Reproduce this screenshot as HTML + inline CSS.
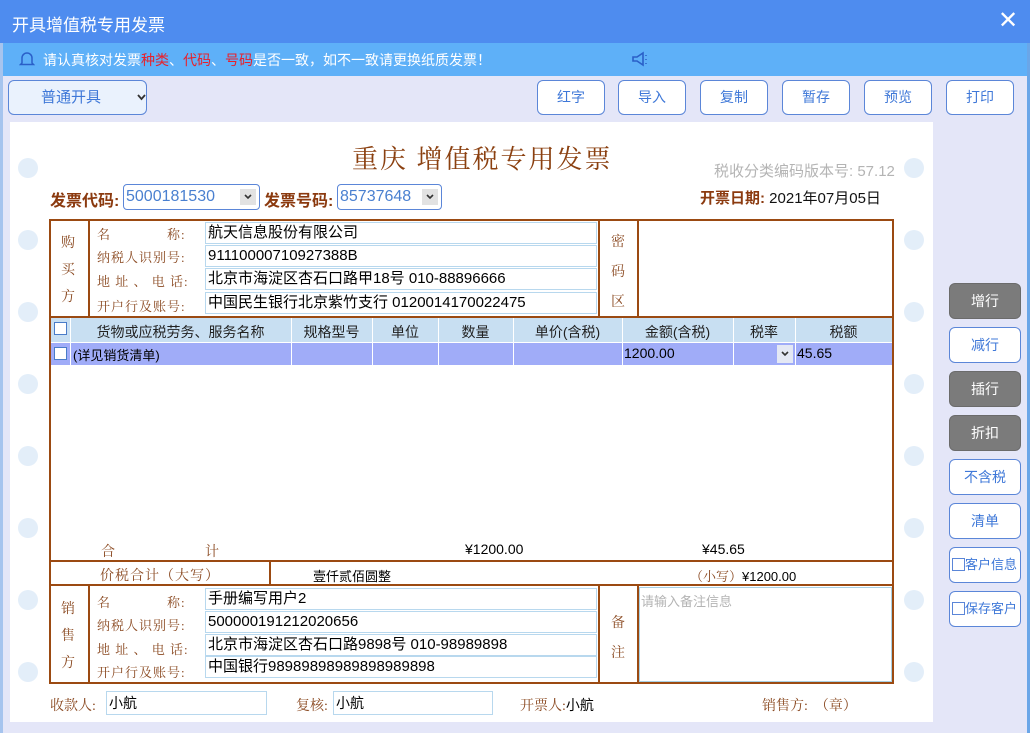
<!DOCTYPE html>
<html><head><meta charset="utf-8"><style>
*{margin:0;padding:0;box-sizing:border-box}
body{width:1030px;height:733px;overflow:hidden;background:#e4e6f8;font-family:"Liberation Sans","Noto Sans CJK SC",sans-serif;position:relative;font-size:14px}
.a{position:absolute}
.kai{font-family:"Liberation Serif","Noto Serif CJK SC",serif;color:#8b4a22}
.btn{position:absolute;top:80px;width:68px;height:35px;border:1px solid #5b86d8;border-radius:6px;background:#fff;color:#3f78d8;font-size:14px;text-align:center;line-height:33px}
.sb{position:absolute;left:949px;width:72px;height:36px;border:1px solid #5b86d8;border-radius:6px;background:#fff;color:#3f78d8;font-size:14px;text-align:center;line-height:34px}
.sb.g{background:#7b7b7b;color:#fff;border-color:#6b6b6b}
.hole{position:absolute;width:20px;height:20px;border-radius:50%;background:#e3eef9}
.bl{position:absolute;background:#9b4a12}
.inp{position:absolute;left:205px;width:392px;height:22px;border:1px solid #b8d8ee;font-size:15px;line-height:20px;padding-left:2px;color:#000}
.lab{position:absolute;left:97px;font-size:13px;letter-spacing:1px}
.hd{position:absolute;top:322px;font-size:14px;color:#222;text-align:center}
.vc{position:absolute;width:1px;background:#fff}
.cb{display:inline-block;width:13px;height:13px;border:1px solid #4a7cc8;background:#fff}
.chev{position:absolute;width:16px;height:16px;background:#e2e2e2}
</style></head><body>
<div class="a" style="left:0;top:0;width:1030px;height:43px;background:#4e8cef"></div>
<div class="a" style="left:12px;top:11px;color:#fff;font-size:17px">开具增值税专用发票</div>
<div class="a" style="left:998px;top:6px;color:#fff;font-size:24px">✕</div>
<div class="a" style="left:0;top:43px;width:1030px;height:33px;background:#5eb0f8"></div>
<svg class="a" style="left:19px;top:50px" width="16" height="18" viewBox="0 0 16 18"><path d="M3 13V8a5 5 0 0 1 10 0v5l1.5 1.5h-13z" fill="none" stroke="#2a5fc8" stroke-width="1.5"/></svg>
<div class="a" style="left:43px;top:50px;color:#fff;font-size:14px">请认真核对发票<span style="color:#e8202a">种类</span>、<span style="color:#e8202a">代码</span>、<span style="color:#e8202a">号码</span>是否一致，如不一致请更换纸质发票！</div>
<svg class="a" style="left:630px;top:50px" width="22" height="18" viewBox="0 0 22 18"><path d="M3 7h4l6-4v12l-6-4H3z" fill="none" stroke="#2a5fc8" stroke-width="1.6"/><path d="M16 5v1M16 9v1M16 13v1" stroke="#2a5fc8" stroke-width="1.5"/></svg>
<div class="a" style="left:1027px;top:43px;width:3px;height:690px;background:#6aa6e8"></div>
<div class="a" style="left:0;top:43px;width:3px;height:690px;background:#a6c4ee"></div>

<div class="a" style="left:8px;top:80px;width:139px;height:35px;border:1px solid #5b86d8;border-radius:6px;background:#eaf2fd;color:#3f78d8;font-size:15px;line-height:33px;padding-left:32px">普通开具<svg style="position:absolute;left:128px;top:13px" width="9" height="7" viewBox="0 0 9 7"><path d="M1 1l3.5 4L8 1" fill="none" stroke="#333" stroke-width="1.8"/></svg></div>
<div class="btn" style="left:537px">红字</div>
<div class="btn" style="left:618px">导入</div>
<div class="btn" style="left:700px">复制</div>
<div class="btn" style="left:782px">暂存</div>
<div class="btn" style="left:864px">预览</div>
<div class="btn" style="left:946px">打印</div>

<div class="a" style="left:10px;top:122px;width:923px;height:600px;background:#fff"></div>

<div class="hole" style="left:18px;top:158px"></div><div class="hole" style="left:18px;top:230px"></div><div class="hole" style="left:18px;top:302px"></div><div class="hole" style="left:18px;top:374px"></div><div class="hole" style="left:18px;top:446px"></div><div class="hole" style="left:18px;top:518px"></div><div class="hole" style="left:18px;top:590px"></div><div class="hole" style="left:18px;top:662px"></div>
<div class="hole" style="left:904px;top:158px"></div><div class="hole" style="left:904px;top:230px"></div><div class="hole" style="left:904px;top:302px"></div><div class="hole" style="left:904px;top:374px"></div><div class="hole" style="left:904px;top:446px"></div><div class="hole" style="left:904px;top:518px"></div><div class="hole" style="left:904px;top:590px"></div><div class="hole" style="left:904px;top:662px"></div>

<div class="a kai" style="left:352px;top:139px;font-size:26px;letter-spacing:2px;color:#8b4010">重庆 增值税专用发票</div>
<div class="a" style="left:714px;top:160px;color:#b4b4b4;font-size:15px">税收分类编码版本号: 57.12</div>
<div class="a" style="left:50px;top:187px;color:#8b3a0f;font-size:16px;font-weight:bold">发票代码:</div>
<div class="a" style="left:123px;top:184px;width:137px;height:26px;border:1px solid #5b86d8;border-radius:4px;color:#4a80d0;font-size:16px;line-height:24px;padding-left:2px">5000181530<span class="chev" style="right:3px;top:4px"><svg style="position:absolute;left:4px;top:5px" width="8" height="6" viewBox="0 0 8 6"><path d="M1 1l3 3 3-3" fill="none" stroke="#333" stroke-width="1.6"/></svg></span></div>
<div class="a" style="left:264px;top:187px;color:#8b3a0f;font-size:16px;font-weight:bold">发票号码:</div>
<div class="a" style="left:337px;top:184px;width:105px;height:26px;border:1px solid #5b86d8;border-radius:4px;color:#4a80d0;font-size:16px;line-height:24px;padding-left:2px">85737648<span class="chev" style="right:3px;top:4px"><svg style="position:absolute;left:4px;top:5px" width="8" height="6" viewBox="0 0 8 6"><path d="M1 1l3 3 3-3" fill="none" stroke="#333" stroke-width="1.6"/></svg></span></div>
<div class="a" style="left:700px;top:187px;font-size:15px;color:#111"><b style="color:#8b3a0f">开票日期:</b> 2021年07月05日</div>

<div class="a" style="left:49px;top:219px;width:845px;height:465px;border:2px solid #9b4a12"></div>
<div class="bl" style="left:49px;top:316px;width:845px;height:2px"></div>
<div class="bl" style="left:49px;top:560px;width:845px;height:2px"></div>
<div class="bl" style="left:49px;top:584px;width:845px;height:2px"></div>
<div class="bl" style="left:88px;top:219px;width:2px;height:98px"></div>
<div class="bl" style="left:598px;top:219px;width:2px;height:98px"></div>
<div class="bl" style="left:637px;top:219px;width:2px;height:98px"></div>
<div class="bl" style="left:269px;top:561px;width:2px;height:24px"></div>
<div class="bl" style="left:88px;top:585px;width:2px;height:98px"></div>
<div class="bl" style="left:598px;top:585px;width:2px;height:98px"></div>
<div class="bl" style="left:637px;top:585px;width:2px;height:98px"></div>

<div class="a kai" style="left:61px;top:230px;font-size:14px;line-height:27px">购<br>买<br>方</div>
<div class="lab kai" style="top:224px">名　　　　称:</div>
<div class="lab kai" style="top:247px">纳税人识别号:</div>
<div class="lab kai" style="top:271px">地 址 、 电 话:</div>
<div class="lab kai" style="top:296px">开户行及账号:</div>
<div class="inp" style="top:222px">航天信息股份有限公司</div>
<div class="inp" style="top:245px">91110000710927388B</div>
<div class="inp" style="top:268px">北京市海淀区杏石口路甲18号 010-88896666</div>
<div class="inp" style="top:292px">中国民生银行北京紫竹支行 0120014170022475</div>
<div class="a kai" style="left:611px;top:228px;font-size:14px;line-height:30px">密<br>码<br>区</div>

<div class="a" style="left:51px;top:318px;width:841px;height:24px;background:#c8dff2"></div>
<div class="a" style="left:51px;top:343px;width:841px;height:22px;background:#a0acf8"></div>
<div class="vc" style="left:70px;top:318px;height:47px"></div>
<div class="vc" style="left:291px;top:318px;height:47px"></div>
<div class="vc" style="left:372px;top:318px;height:47px"></div>
<div class="vc" style="left:438px;top:318px;height:47px"></div>
<div class="vc" style="left:513px;top:318px;height:47px"></div>
<div class="vc" style="left:622px;top:318px;height:47px"></div>
<div class="vc" style="left:733px;top:318px;height:47px"></div>
<div class="vc" style="left:795px;top:318px;height:47px"></div>
<div class="a" style="left:54px;top:322px"><span class="cb"></span></div>
<div class="a" style="left:54px;top:347px"><span class="cb"></span></div>
<div class="hd" style="left:70px;width:221px">货物或应税劳务、服务名称</div>
<div class="hd" style="left:291px;width:81px">规格型号</div>
<div class="hd" style="left:372px;width:66px">单位</div>
<div class="hd" style="left:438px;width:75px">数量</div>
<div class="hd" style="left:513px;width:109px">单价(含税)</div>
<div class="hd" style="left:622px;width:111px">金额(含税)</div>
<div class="hd" style="left:733px;width:62px">税率</div>
<div class="hd" style="left:795px;width:97px">税额</div>
<div class="a" style="left:73px;top:345px;font-size:13px">(详见销货清单)</div>
<div class="a" style="left:624px;top:345px;font-size:14px">1200.00</div>
<div class="a" style="left:777px;top:345px;width:16px;height:18px;background:#e4e8f4"><svg style="position:absolute;left:4px;top:6px" width="8" height="6" viewBox="0 0 8 6"><path d="M1 1l3 3 3-3" fill="none" stroke="#333" stroke-width="1.6"/></svg></div>
<div class="a" style="left:797px;top:345px;font-size:14px">45.65</div>

<div class="a kai" style="left:101px;top:541px;font-size:14px">合</div>
<div class="a kai" style="left:205px;top:541px;font-size:14px">计</div>
<div class="a" style="left:465px;top:541px;font-size:14px">¥1200.00</div>
<div class="a" style="left:702px;top:541px;font-size:14px">¥45.65</div>
<div class="a kai" style="left:100px;top:565px;font-size:14px;letter-spacing:1px">价税合计（大写）</div>
<div class="a" style="left:313px;top:566px;font-size:13px">壹仟贰佰圆整</div>
<div class="a" style="left:690px;top:566px;font-size:13px"><span class="kai">（小写）</span>¥1200.00</div>

<div class="a kai" style="left:61px;top:596px;font-size:14px;line-height:27px">销<br>售<br>方</div>
<div class="lab kai" style="top:592px">名　　　　称:</div>
<div class="lab kai" style="top:615px">纳税人识别号:</div>
<div class="lab kai" style="top:639px">地 址 、 电 话:</div>
<div class="lab kai" style="top:662px">开户行及账号:</div>
<div class="inp" style="top:588px">手册编写用户2</div>
<div class="inp" style="top:611px">500000191212020656</div>
<div class="inp" style="top:634px">北京市海淀区杏石口路9898号 010-98989898</div>
<div class="inp" style="top:656px">中国银行98989898989898989898</div>
<div class="a kai" style="left:611px;top:609px;font-size:14px;line-height:30px">备<br>注</div>
<div class="a" style="left:639px;top:587px;width:253px;height:95px;border:1px solid #a8d0e4;color:#b4b4b4;font-size:13px;padding:3px 1px">请输入备注信息</div>

<div class="a kai" style="left:50px;top:695px;font-size:14px">收款人:</div>
<div class="a" style="left:106px;top:691px;width:161px;height:24px;border:1px solid #b8d8ee;font-size:14px;line-height:22px;padding-left:2px">小航</div>
<div class="a kai" style="left:296px;top:695px;font-size:14px">复核:</div>
<div class="a" style="left:333px;top:691px;width:160px;height:24px;border:1px solid #b8d8ee;font-size:14px;line-height:22px;padding-left:2px">小航</div>
<div class="a" style="left:520px;top:695px;font-size:14px"><span class="kai">开票人:</span>小航</div>
<div class="a kai" style="left:762px;top:695px;font-size:14px">销售方:　（章）</div>

<div class="sb g" style="top:283px">增行</div>
<div class="sb" style="top:327px">减行</div>
<div class="sb g" style="top:371px">插行</div>
<div class="sb g" style="top:415px">折扣</div>
<div class="sb" style="top:459px">不含税</div>
<div class="sb" style="top:503px">清单</div>
<div class="sb" style="top:547px;font-size:13px;text-align:left;padding-left:2px"><span class="cb" style="vertical-align:-2px;border-color:#5b86d8"></span>客户信息</div>
<div class="sb" style="top:591px;font-size:13px;text-align:left;padding-left:2px"><span class="cb" style="vertical-align:-2px;border-color:#5b86d8"></span>保存客户</div>
</body></html>
